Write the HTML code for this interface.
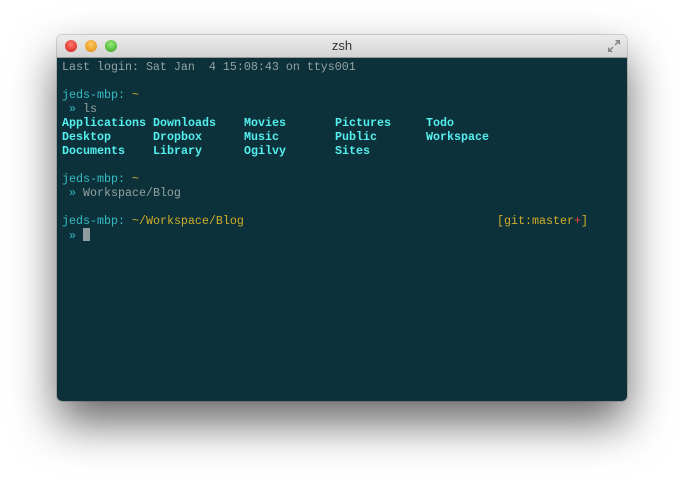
<!DOCTYPE html>
<html><head><style>
body{margin:0;width:684px;height:480px;background:#fff;overflow:hidden;position:relative}
.win{position:absolute;left:57px;top:35px;width:570px;height:366px;border-radius:5px;overflow:hidden;box-shadow:0 22px 45px rgba(0,0,0,.6),0 0 0 1px rgba(0,0,0,.15)}
.tb{height:22px;background:linear-gradient(#ececec,#d3d3d3);border-bottom:1px solid #9a9a9a;position:relative;font:13px "Liberation Sans",sans-serif;color:#333;text-align:center;line-height:22px}
.b{position:absolute;top:5px;width:12px;height:12px;border-radius:50%}
.term{background:#0c313a;height:343px;position:relative;font:11.67px/14px "Liberation Mono",monospace;color:#93a2a4;white-space:pre}
.l{position:absolute}
.c{color:#36bcc6}.y{color:#d0ae28}.w{color:#55f0f0;font-weight:bold}.r{color:#e8453a}
.cur{display:inline-block;width:7px;height:13px;background:#8f9da0;vertical-align:-2px}
</style></head><body>
<div class="win">
<div class="tb">zsh
<div class="b" style="left:8px;background:radial-gradient(circle at 50% 35%,#ff7a70,#d01a14)"></div>
<div class="b" style="left:28px;background:radial-gradient(circle at 50% 35%,#ffc860,#e08a10)"></div>
<div class="b" style="left:48px;background:radial-gradient(circle at 50% 35%,#98ea78,#34a020)"></div>
<svg style="position:absolute;right:6px;top:4px" width="14" height="14"><path d="M8 1h5v5zM1 13V8l5 5z" fill="#888"/><path d="M12 2L8 6M2 12l4-4" stroke="#888" stroke-width="1.5"/></svg>
</div>
<div class="term">
<div class="l" style="left:5px;top:2px">Last login: Sat Jan  4 15:08:43 on ttys001</div>
<div class="l" style="left:5px;top:30px"><span class="c">jeds-mbp:</span> <span class="y">~</span></div>
<div class="l" style="left:5px;top:44px"> <span class="c">»</span> ls</div>
<div class="l w" style="left:5px;top:58px">Applications<br>Desktop<br>Documents</div>
<div class="l w" style="left:96px;top:58px">Downloads<br>Dropbox<br>Library</div>
<div class="l w" style="left:187px;top:58px">Movies<br>Music<br>Ogilvy</div>
<div class="l w" style="left:278px;top:58px">Pictures<br>Public<br>Sites</div>
<div class="l w" style="left:369px;top:58px">Todo<br>Workspace</div>
<div class="l" style="left:5px;top:114px"><span class="c">jeds-mbp:</span> <span class="y">~</span></div>
<div class="l" style="left:5px;top:128px"> <span class="c">»</span> Workspace/Blog</div>
<div class="l" style="left:5px;top:156px"><span class="c">jeds-mbp:</span> <span class="y">~/Workspace/Blog</span></div>
<div class="l y" style="left:440px;top:156px">[git:master<span class="r">+</span>]</div>
<div class="l" style="left:5px;top:170px"> <span class="c">»</span> <span class="cur"></span></div>
</div>
</div>
</body></html>
